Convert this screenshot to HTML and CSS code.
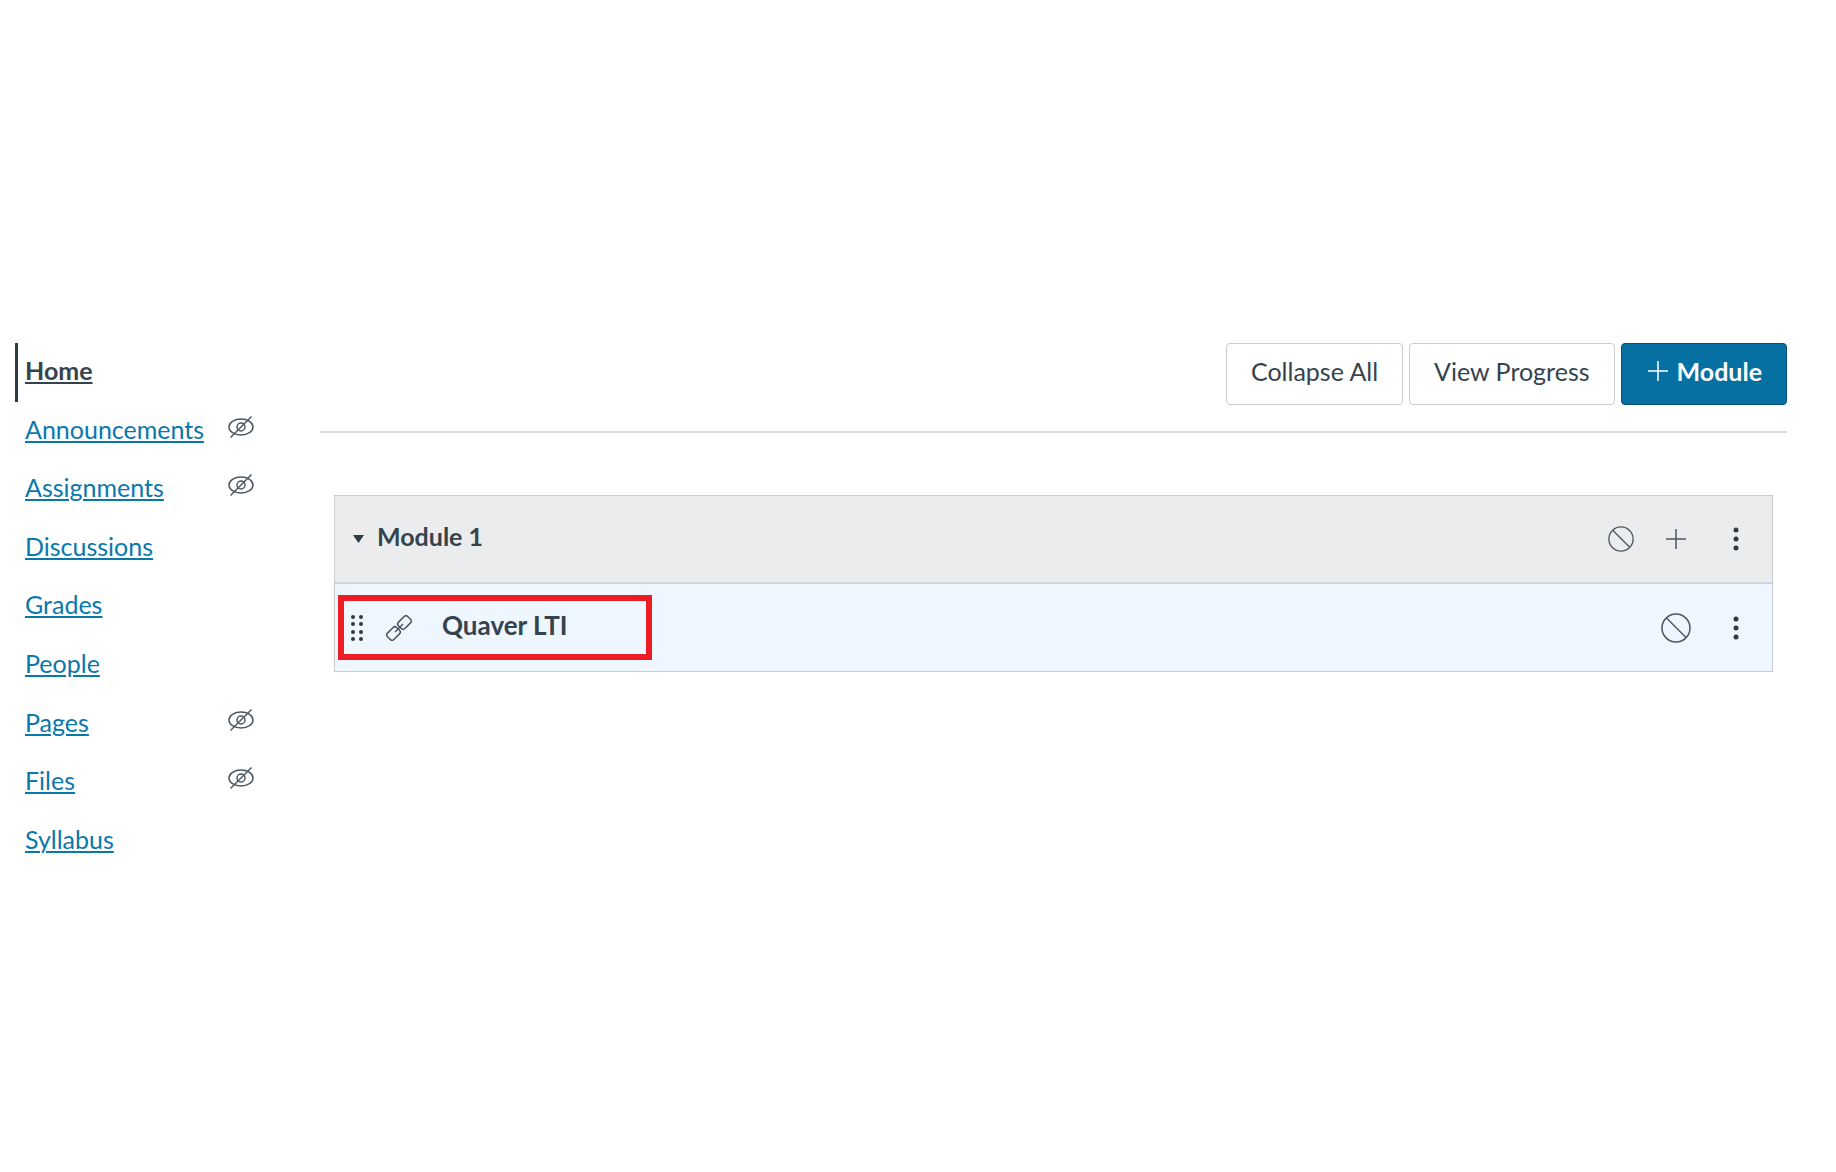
FILE: index.html
```html
<!DOCTYPE html>
<html lang="en">
  <head>
    <meta charset="utf-8">
    <meta name="viewport" content="width=device-width, initial-scale=1">
    <title>Modules</title>
    <link rel="stylesheet" href="styles.css">
  </head>
  <body>
    <svg class="defs" aria-hidden="true">
      <symbol id="hidden-eye" viewBox="0 0 26 24">
        <ellipse cx="13" cy="12" rx="12" ry="8"/>
        <circle cx="13" cy="12" r="4"/>
        <path d="M2.500 22.500L23.500 1.500"/>
      </symbol>
      <symbol id="ban" viewBox="0 0 30 30">
        <circle cx="15" cy="15" r="14"/>
        <path d="M5.500 5L25 24.500"/>
      </symbol>
      <symbol id="plus" viewBox="0 0 20 20">
        <path d="M10 0V20M0 10H20"/>
      </symbol>
      <symbol id="dots" viewBox="0 0 6 24">
        <circle cx="3" cy="3" r="2.500"/>
        <circle cx="3" cy="12" r="2.500"/>
        <circle cx="3" cy="21" r="2.500"/>
      </symbol>
    </svg>

    <div class="layout">
      <nav class="course-nav" aria-label="Course">
        <ul>
          <li class="active"><a href="#home">Home</a></li>
          <li><a href="#announcements">Announcements</a><svg class="icon eye"><use href="#hidden-eye"/></svg></li>
          <li><a href="#assignments">Assignments</a><svg class="icon eye"><use href="#hidden-eye"/></svg></li>
          <li><a href="#discussions">Discussions</a></li>
          <li><a href="#grades">Grades</a></li>
          <li><a href="#people">People</a></li>
          <li><a href="#pages">Pages</a><svg class="icon eye"><use href="#hidden-eye"/></svg></li>
          <li><a href="#files">Files</a><svg class="icon eye"><use href="#hidden-eye"/></svg></li>
          <li><a href="#syllabus">Syllabus</a></li>
        </ul>
      </nav>

      <main class="content">
        <div class="toolbar">
          <button type="button" class="btn">Collapse All</button>
          <button type="button" class="btn">View Progress</button>
          <button type="button" class="btn btn-primary"><svg class="icon plus"><use href="#plus"/></svg>Module</button>
        </div>

        <section class="module">
          <header class="module-header">
            <button type="button" class="toggle" aria-label="Collapse module"></button>
            <h2>Module 1</h2>
            <div class="actions">
              <button type="button" class="action compact" aria-label="Publish module"><svg class="icon ban-small"><use href="#ban"/></svg></button>
              <button type="button" class="action" aria-label="Add item"><svg class="icon plus"><use href="#plus"/></svg></button>
              <button type="button" class="action" aria-label="Module options"><svg class="icon dots"><use href="#dots"/></svg></button>
            </div>
          </header>
          <div class="module-item">
            <div class="highlight">
              <svg class="icon grip" viewBox="0 0 12 26">
                <circle cx="2" cy="2" r="2"/><circle cx="10" cy="2" r="2"/>
                <circle cx="2" cy="9" r="2"/><circle cx="10" cy="9" r="2"/>
                <circle cx="2" cy="17" r="2"/><circle cx="10" cy="17" r="2"/>
                <circle cx="2" cy="24" r="2"/><circle cx="10" cy="24" r="2"/>
              </svg>
              <svg class="icon link" viewBox="0 0 26 26">
                <rect x="12" y="3" width="13" height="9" rx="2.500" transform="rotate(-45 18.500 7.500)"/>
                <rect x="1" y="14" width="13" height="9" rx="2.500" transform="rotate(-45 7.500 18.500)"/>
                <path d="M9 17L17 9"/>
              </svg>
              <span class="item-title">Quaver LTI</span>
            </div>
            <div class="actions">
              <button type="button" class="action" aria-label="Publish item"><svg class="icon ban"><use href="#ban"/></svg></button>
              <button type="button" class="action" aria-label="Item options"><svg class="icon dots"><use href="#dots"/></svg></button>
            </div>
          </div>
        </section>
      </main>
    </div>
  </body>
</html>
```
FILE: styles.css
```css
* {
  box-sizing: border-box;
}

body {
  margin: 0;
  background: #fff;
  color: #35434d;
  font-family: Lato, "Liberation Sans", sans-serif;
  font-size: 25px;
  line-height: 32px;
}

button {
  font: inherit;
  color: inherit;
  cursor: pointer;
}

.defs {
  position: absolute;
  width: 0;
  height: 0;
}

.icon {
  flex: none;
  fill: none;
  stroke: #4b5760;
  stroke-width: 1.5;
}

.layout {
  display: flex;
  gap: 66px;
  padding: 343px 49px 40px 15px;
}

/* course navigation */
.course-nav {
  flex: none;
  width: 239px;
}

.course-nav ul {
  display: grid;
  grid-auto-rows: 1fr;
  min-height: 527px;
  margin: 0;
  padding: 0;
  list-style: none;
}

.course-nav li {
  display: flex;
  align-items: center;
  justify-content: space-between;
  padding-left: 7px;
  border-left: 3px solid transparent;
}

.course-nav a {
  padding-bottom: 4px;
  color: #0a78ad;
  text-underline-offset: 2px;
  text-decoration-thickness: 2px;
}

.course-nav .active {
  border-color: #2d3b45;
}

.course-nav .active a {
  color: #35434d;
  font-weight: bold;
}

.eye {
  width: 26px;
  height: 24px;
  margin-bottom: 8px;
}

/* main column */
.content {
  flex: 1;
  min-width: 0;
}

.toolbar {
  display: flex;
  justify-content: flex-end;
  gap: 6px;
  padding-bottom: 26px;
  border-bottom: 2px solid #d5dade;
}

.btn {
  display: flex;
  align-items: center;
  gap: 9px;
  padding: 11px 24px 17px;
  border: 1px solid #c7cdd1;
  border-radius: 4px;
  background: #fff;
}

.btn-primary {
  padding-left: 26px;
  border-color: #084f78;
  background: #0770a3;
  color: #fff;
  font-weight: bold;
}

.btn-primary .icon {
  stroke: #fff;
}

.plus {
  width: 20px;
  height: 20px;
}

.module {
  margin: 62px 14px 0;
  border: 1px solid #c7cdd1;
}

.module-header,
.module-item {
  display: flex;
  align-items: center;
  height: 88px;
}

.module-header {
  padding-left: 18px;
  border-bottom: 2px solid #d0d5d9;
  background: #ebecee;
}

.module-item {
  height: 87px;
  padding-left: 3px;
  background: #eef7ff;
}

.toggle {
  width: 11px;
  height: 8px;
  padding: 0;
  border: 0;
  background: #2d3b45;
  clip-path: polygon(0 0, 100% 0, 50% 100%);
}

.module h2 {
  margin: 0 0 6px 13px;
  font-size: 25px;
  font-weight: bold;
}

.highlight {
  display: flex;
  align-items: center;
  width: 314px;
  height: 65px;
  padding-left: 7px;
  border: 6px solid #ed1c24;
}

.grip {
  width: 12px;
  height: 26px;
  fill: #2d3b45;
  stroke: none;
}

.link {
  width: 26px;
  height: 26px;
  margin: 0 30px 0 23px;
}

.item-title {
  padding-bottom: 5px;
  font-size: 26px;
  font-weight: bold;
}

.actions {
  display: flex;
  margin-left: auto;
  padding-right: 6px;
}

.action {
  display: flex;
  align-items: center;
  justify-content: center;
  width: 60px;
  height: 40px;
  padding: 0;
  border: 0;
  background: none;
}

.compact {
  width: 50px;
}

.ban {
  width: 30px;
  height: 30px;
}

.ban-small {
  width: 26px;
  height: 26px;
}

.dots {
  width: 6px;
  height: 24px;
  fill: #2d3b45;
  stroke: none;
}
```
